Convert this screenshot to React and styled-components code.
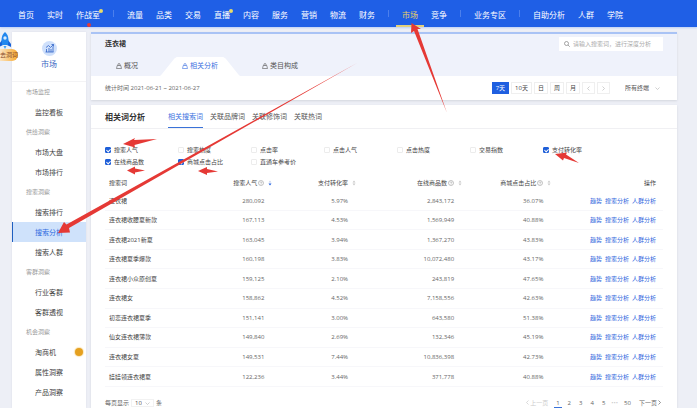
import { useState } from "react";
import styled, { createGlobalStyle } from "styled-components";

const navGroups = [
    ["首页", "实时", "作战室"],
    ["流量", "品类", "交易", "直播", "内容", "服务", "营销", "物流", "财务"],
    ["市场", "竞争"],
    ["业务专区"],
    ["自助分析", "人群", "学院"],
];
const dotted = ["作战室", "直播"];

const sideMenu = [
    { title: "市场监控", items: ["监控看板"] },
    { title: "供给洞察", items: ["市场大盘", "市场排行"] },
    { title: "搜索洞察", items: ["搜索排行", "搜索分析", "搜索人群"] },
    { title: "客群洞察", items: ["行业客群", "客群透视"] },
    { title: "机会洞察", items: ["淘商机", "属性洞察", "产品洞察"] },
];

const pageTabs = ["概况", "相关分析", "类目构成"];
const wordTabs = ["相关搜索词", "关联品牌词", "关联修饰词", "关联热词"];
const periods = ["7天", "10天", "日", "周", "月"];

const metrics = [
    "搜索人气", "搜索热度", "点击率", "点击人气", "点击热度", "交易指数", "支付转化率",
    "在线商品数", "商城点击占比", "直通车参考价",
];

const columns = [
    { name: "搜索人气", help: true, sorted: true },
    { name: "支付转化率" },
    { name: "在线商品数", help: true },
    { name: "商城点击占比", help: true },
];

const rows = [
    ["连衣裙", "280,092", "5.97%", "2,843,172", "36.07%"],
    ["连衣裙收腰夏新款", "167,113", "4.53%", "1,569,949", "40.88%"],
    ["连衣裙2021新夏", "163,045", "3.94%", "1,367,270", "43.83%"],
    ["连衣裙夏季爆款", "160,198", "3.83%", "10,072,480", "43.17%"],
    ["连衣裙小众原创夏", "159,125", "2.10%", "243,819", "47.65%"],
    ["连衣裙女", "158,862", "4.52%", "7,158,556", "42.63%"],
    ["初恋连衣裙夏季", "151,141", "3.00%", "643,580", "51.38%"],
    ["仙女连衣裙薄款", "149,840", "2.69%", "132,346", "45.19%"],
    ["连衣裙女夏", "149,531", "7.44%", "10,836,398", "42.73%"],
    ["娃娃领连衣裙夏", "122,236", "3.44%", "371,778", "40.88%"],
];

function BagIcon() {
    return (
        <svg width="6" height="6" viewBox="0 0 12 12" fill="none" stroke="currentColor" strokeWidth="1.2">
            <path d="M2.500 5h7L11 11H1z" />
            <path d="M4 5V3a2 2 0 0 1 4 0v2" />
        </svg>
    );
}

function HelpIcon() {
    return (
        <svg width="6" height="6" viewBox="0 0 12 12" fill="none" stroke="#888" strokeWidth="1">
            <circle cx="6" cy="6" r="5" />
            <path d="M4.500 5a1.500 1.500 0 1 1 2 1.500c-.4.2-.5.5-.5 1M6 8.400v1" />
        </svg>
    );
}

function SortIcon({ active }) {
    return (
        <svg width="4" height="6" viewBox="0 0 8 12">
            <path d="M1 5l3-4 3 4z" fill={active ? "#c9d6f0" : "#c8c8c8"} />
            <path d="M1 7l3 4 3-4z" fill={active ? "#1f5fe0" : "#c8c8c8"} />
        </svg>
    );
}

function Chevron({ dir = "down" }) {
    const paths = { down: "M1 3l4 4 4-4", left: "M7 1L3 5l4 4", right: "M3 1l4 4-4 4" };
    return (
        <svg width="5" height="5" viewBox="0 0 10 10" fill="none" stroke="currentColor" strokeWidth="1.4">
            <path d={paths[dir]} />
        </svg>
    );
}

function Rocket() {
    return (
        <RocketBox href="#rocket">
            <svg width="12" height="17" viewBox="0 0 12 17">
                <path d="M2 8L-1 12v3l4-2zM8 8l3 4v3l-4-2z" fill="#1560d8" />
                <path d="M5 0C1.500 3 1 7 2 13h6C9 7 8.500 3 5 0z" fill="#2387ee" />
                <circle cx="5" cy="6" r="1.700" fill="#d8ecff" />
                <path d="M3.500 14h3L5 17z" fill="#3fa0f5" />
            </svg>
            <span>去洞词</span>
        </RocketBox>
    );
}

function Arrows() {
    return (
        <ArrowLayer width="697" height="408" viewBox="0 0 697 408" fill="#e53935" aria-hidden="true">
            <path d="M357 63L69 228 70 232.500 58 233 64 222 66.500 224.500z" />
            <path d="M447 113L417.500 29 421 29 411.500 23 411 33 414 31z" />
            <path d="M157 139L134 140 135 138 123 144 135 147.500 134.500 145z" />
            <path d="M145 170.500L135 168.500 135 166.500 127 170.500 135 174.500 135 172.500z" />
            <path d="M218 171.500L207 169 207 167 198 171 207 175 207 173z" />
            <path d="M579 163L566 154.500 567 152.500 555 154 563 160.500 564 158z" />
            <circle cx="89" cy="25" r="2" />
        </ArrowLayer>
    );
}

function App() {
    const [checked, setChecked] = useState(["搜索人气", "支付转化率", "在线商品数", "商城点击占比"]);
    const [period, setPeriod] = useState("7天");

    const toggle = (name) => {
        setChecked(checked.includes(name) ? checked.filter((m) => m !== name) : [...checked, name]);
    };

    return (
        <Page>
            <GlobalStyle />
            <TopNav>
                {navGroups.map((group) => (
                    <NavGroup key={group[0]}>
                        {group.map((name) => (
                            <NavLink href="#nav" key={name} $active={name === "市场"}>
                                {name}
                                {dotted.includes(name) && <NavDot />}
                            </NavLink>
                        ))}
                    </NavGroup>
                ))}
            </TopNav>
            <Body>
                <Sidebar>
                    <SideHead>
                        <svg width="15" height="15" viewBox="0 0 30 30" fill="none" stroke="#2f62c9" strokeWidth="1.6">
                            <circle cx="15" cy="15" r="15" fill="#cfe0fb" stroke="none" />
                            <path d="M7 22h16M9 22v-6M14 22v-8M18 22v-6M22 22V11M8 13l5-4 4 4 6-6M19 7h4v4" />
                        </svg>
                        <h2>市场</h2>
                    </SideHead>
                    {sideMenu.map((group) => (
                        <div key={group.title}>
                            <SideTitle>{group.title}</SideTitle>
                            {group.items.map((item) => (
                                <SideLink href="#side" key={item} $active={item === "搜索分析"}>
                                    {item}
                                    {item === "淘商机" && <HotDot />}
                                </SideLink>
                            ))}
                        </div>
                    ))}
                </Sidebar>
                <Main>
                    <Card $accent>
                        <CardTop>
                            <TitleRow>
                                <h1>连衣裙</h1>
                                <SearchBox>
                                    <svg width="6" height="6" viewBox="0 0 12 12" fill="none" stroke="#777" strokeWidth="1.3">
                                        <circle cx="5" cy="5" r="4" />
                                        <path d="M8 8l3.500 3.500" />
                                    </svg>
                                    <input type="text" aria-label="搜索词" placeholder="请输入搜索词，进行深度分析" />
                                </SearchBox>
                            </TitleRow>
                            <PageTabs>
                                {pageTabs.map((tab) => (
                                    <PageTab key={tab} $active={tab === "相关分析"}>
                                        <BagIcon />
                                        {tab}
                                    </PageTab>
                                ))}
                            </PageTabs>
                        </CardTop>
                        <FilterRow>
                            <p>统计时间 2021-06-21 ~ 2021-06-27</p>
                            <Periods>
                                {periods.map((p) => (
                                    <PeriodButton key={p} $active={p === period} onClick={() => setPeriod(p)}>
                                        {p}
                                    </PeriodButton>
                                ))}
                                <PeriodButton $muted aria-label="上一个"><Chevron dir="left" /></PeriodButton>
                                <PeriodButton $muted aria-label="下一个"><Chevron dir="right" /></PeriodButton>
                            </Periods>
                            <SelectWrap>
                                <select aria-label="终端">
                                    <option>所有终端</option>
                                </select>
                                <Chevron />
                            </SelectWrap>
                        </FilterRow>
                    </Card>
                    <Card $fill>
                        <WordHead>
                            <h2>相关词分析</h2>
                            {wordTabs.map((tab) => (
                                <WordTab key={tab} $active={tab === "相关搜索词"}>{tab}</WordTab>
                            ))}
                        </WordHead>
                        <MetricGrid>
                            {metrics.map((name) => (
                                <Metric key={name}>
                                    <input type="checkbox" checked={checked.includes(name)} onChange={() => toggle(name)} />
                                    {name}
                                </Metric>
                            ))}
                        </MetricGrid>
                        <TableWrap>
                            <WordTable>
                                <thead>
                                    <tr>
                                        <th>搜索词</th>
                                        {columns.map((col) => (
                                            <th key={col.name}>
                                                <HeadCell>
                                                    {col.name}
                                                    {col.help && <HelpIcon />}
                                                    <SortButton aria-label={col.name}><SortIcon active={col.sorted} /></SortButton>
                                                </HeadCell>
                                            </th>
                                        ))}
                                        <th>操作</th>
                                    </tr>
                                </thead>
                                <tbody>
                                    {rows.map((row) => (
                                        <tr key={row[0]}>
                                            {row.map((cell) => <td key={cell}>{cell}</td>)}
                                            <td>
                                                <RowLinks>
                                                    <a href="#trend">趋势</a>
                                                    <a href="#search">搜索分析</a>
                                                    <a href="#crowd">人群分析</a>
                                                </RowLinks>
                                            </td>
                                        </tr>
                                    ))}
                                </tbody>
                            </WordTable>
                        </TableWrap>
                        <TableFoot>
                            <PageSize>
                                <label htmlFor="size">每页显示</label>
                                <SelectWrap $boxed>
                                    <select id="size">
                                        <option>10</option>
                                    </select>
                                    <Chevron />
                                </SelectWrap>
                                条
                            </PageSize>
                            <Pager>
                                <PageButton $muted disabled><Chevron dir="left" />上一页</PageButton>
                                {["1", "2", "3", "4", "5"].map((n) => (
                                    <PageButton key={n} $active={n === "1"}>{n}</PageButton>
                                ))}
                                <PageDots>•••</PageDots>
                                <PageButton>50</PageButton>
                                <PageButton>下一页<Chevron dir="right" /></PageButton>
                            </Pager>
                        </TableFoot>
                    </Card>
                </Main>
            </Body>
            <Rocket />
            <Arrows />
        </Page>
    );
}

export default App;

const GlobalStyle = createGlobalStyle`
    * {
        box-sizing: border-box;
        margin: 0;
        padding: 0;
    }
    body {
        background: #edeff6;
        color: #444;
        font: 6px/1 "Open Sans", "Noto Sans CJK SC", sans-serif;
    }
    a {
        color: inherit;
        text-decoration: none;
    }
    button, input, select {
        font: inherit;
        color: inherit;
        border: 0;
        background: none;
        outline: none;
    }
    svg {
        display: block;
        flex: none;
    }
`;

const Page = styled.div`
    position: relative;
    min-height: 100vh;
    display: flex;
    flex-direction: column;
    overflow: hidden;
`;

const TopNav = styled.nav`
    display: flex;
    height: 27px;
    padding: 0 18px;
    background: #1f5fe6;
    box-shadow: 0 1px 2px #b9cdf5;
    color: #fff;
    font-size: 8px;
`;

const NavGroup = styled.div`
    display: flex;
    align-items: center;
    gap: 13px;

    & + &::before {
        content: "";
        width: 1px;
        height: 7px;
        margin-left: 13px;
        background: #4c7fec;
    }
`;

const NavLink = styled.a`
    position: relative;
    line-height: 25px;
    padding-top: 2px;
    height: 27px;
    white-space: nowrap;
    color: ${({ $active }) => ($active ? "#e9cf6a" : "#fff")};

    &::after {
        content: "";
        display: ${({ $active }) => ($active ? "block" : "none")};
        position: absolute;
        left: -6px;
        right: -6px;
        bottom: 0;
        height: 2px;
        background: #e3d07c;
    }
`;

const NavDot = styled.i`
    position: absolute;
    top: 9px;
    right: -3px;
    width: 4px;
    height: 4px;
    border-radius: 50%;
    background: #e8dc6a;
`;

const Body = styled.div`
    flex: 1;
    display: flex;
    gap: 5px;
    padding: 5px 20px 0 12px;
`;

const Sidebar = styled.aside`
    flex: none;
    width: 74px;
    background: #fff;
    box-shadow: 0 0 2px #d9dce6;
`;

const SideHead = styled.div`
    display: flex;
    flex-direction: column;
    align-items: center;
    gap: 4px;
    height: 50px;
    padding-top: 9px;
    border-bottom: 1px solid #f3f3f5;

    h2 {
        font-size: 8px;
        font-weight: 400;
        line-height: 8px;
        color: #3a68c4;
    }
`;

const SideTitle = styled.h3`
    padding-left: 14px;
    font-size: 6px;
    font-weight: 400;
    line-height: 20px;
    color: #999;
`;

const SideLink = styled.a`
    display: flex;
    align-items: center;
    justify-content: space-between;
    height: 20px;
    padding: 0 3px 0 22px;
    border-left: 1px solid ${({ $active }) => ($active ? "#1f5fc0" : "#fff")};
    background: ${({ $active }) => ($active ? "#cfe2fb" : "#fff")};
    color: ${({ $active }) => ($active ? "#2f6be0" : "#444")};
    font-size: 7px;
`;

const HotDot = styled.i`
    width: 8px;
    height: 8px;
    border-radius: 50%;
    background: #e5a01f;
    box-shadow: 0 0 1px 1px #fbe6bb;
`;

const Main = styled.main`
    flex: 1;
    min-width: 0;
    display: flex;
    flex-direction: column;
    gap: 5px;
`;

const Card = styled.section`
    flex: ${({ $fill }) => ($fill ? 1 : "none")};
    background: #fff;
    border-top: ${({ $accent }) => ($accent ? "2px solid #a9c3f5" : "0")};
    box-shadow: 0 1px 2px #d3d6de;
`;

const CardTop = styled.div`
    padding-top: 3px;
    background: #eff2fb;
`;

const TitleRow = styled.div`
    display: flex;
    align-items: center;
    justify-content: space-between;
    padding: 0 14px;

    h1 {
        font-size: 7px;
        font-weight: 700;
        line-height: 14px;
        color: #333;
    }
`;

const SearchBox = styled.label`
    display: flex;
    align-items: center;
    gap: 3px;
    width: 104px;
    height: 14px;
    padding-left: 5px;
    background: #fff;

    input {
        flex: 1;
        min-width: 0;
        &::placeholder {color: #aaa;}
    }
`;

const PageTabs = styled.div`
    display: flex;
    margin-top: 6px;
    padding-left: 3px;
`;

const PageTab = styled.button`
    display: flex;
    align-items: center;
    gap: 2px;
    height: 19px;
    padding: 0 22px 2px;
    font-size: 7px;
    color: ${({ $active }) => ($active ? "#3a6fe0" : "#555")};
    background: ${({ $active }) => ($active ? "#fff" : "none")};
    clip-path: ${({ $active }) => ($active ? "polygon(18% 8%, 21% 0, 79% 0, 82% 8%, 98% 92%, 100% 100%, 0 100%, 2% 92%)" : "none")};
`;

const FilterRow = styled.div`
    display: flex;
    align-items: center;
    height: 24px;
    padding: 0 17px 0 14px;

    p {
        flex: 1;
        color: #666;
    }
`;

const Periods = styled.div`
    display: flex;
    gap: 2px;
    margin-right: 15px;
`;

const PeriodButton = styled.button`
    display: flex;
    align-items: center;
    justify-content: center;
    height: 12px;
    padding: 0 3px;
    border: 1px solid ${({ $active }) => ($active ? "#1f5fe0" : "#efefef")};
    background: ${({ $active }) => ($active ? "#1f5fe0" : "#fff")};
    color: ${({ $active, $muted }) => ($active ? "#fff" : $muted ? "#bbb" : "#444")};
`;

const SelectWrap = styled.span`
    display: flex;
    align-items: center;
    gap: ${({ $boxed }) => ($boxed ? "3px" : "5px")};
    padding: ${({ $boxed }) => ($boxed ? "0 3px" : "0")};
    border: ${({ $boxed }) => ($boxed ? "1px solid #f2f2f2" : "0")};
    color: #555;

    select {
        appearance: none;
    }
    svg {
        color: #bbb;
    }
`;

const WordHead = styled.div`
    display: flex;
    gap: 7px;
    padding-left: 14px;
    border-bottom: 1px solid #f0f0f3;

    h2 {
        margin-right: 16px;
        font-size: 8px;
        font-weight: 700;
        line-height: 23px;
        color: #333;
    }
`;

const WordTab = styled.button`
    height: 23px;
    border-bottom: 1px solid ${({ $active }) => ($active ? "#3a72d8" : "transparent")};
    font-size: 7px;
    color: ${({ $active }) => ($active ? "#3a72e0" : "#555")};
`;

const MetricGrid = styled.div`
    display: grid;
    grid-template-columns: repeat(7, 1fr);
    padding: 15px 61px 0 14px;
`;

const Metric = styled.label`
    display: flex;
    align-items: center;
    gap: 3px;
    height: 12px;
    white-space: nowrap;

    input {
        appearance: none;
        display: grid;
        place-items: center;
        width: 6px;
        height: 6px;
        border: 1px solid #ececec;
        border-radius: 1px;

        &:checked {
            border-color: #1f5fd8;
            background: #1f5fd8;
        }
        &:checked::after {
            content: "";
            width: 2px;
            height: 3px;
            border: solid #fff;
            border-width: 0 1px 1px 0;
            transform: rotate(45deg);
        }
    }
`;

const TableWrap = styled.div`
    padding: 5px 14px 0;
`;

const WordTable = styled.table`
    width: 100%;
    height: 214px;
    table-layout: fixed;
    border-collapse: collapse;

    th {
        height: 19px;
        font-weight: 400;
        text-align: right;
    }
    th:nth-child(1) {width: 15%;}
    th:nth-child(2) {width: 15%;}
    th:nth-child(3) {width: 15%;}
    th:nth-child(4) {width: 19%;}
    th:nth-child(5) {width: 16%;}

    td {
        padding-right: 8px;
        border-bottom: 1px solid #f7f7fa;
        text-align: right;
        white-space: nowrap;
        color: #666;
    }
    th:first-child, td:first-child {
        padding-left: 4px;
        text-align: left;
        color: #444;
    }
    th:last-child, td:last-child {
        padding-right: 7px;
    }
`;

const HeadCell = styled.span`
    display: flex;
    align-items: center;
    justify-content: flex-end;
    gap: 1px;
`;

const SortButton = styled.button`
    margin-left: 3px;
`;

const RowLinks = styled.div`
    display: flex;
    justify-content: flex-end;
    gap: 3px;
    color: #2f66dd;
`;

const TableFoot = styled.footer`
    display: flex;
    align-items: center;
    justify-content: space-between;
    margin-top: 11px;
    padding: 0 13px 0 14px;
    color: #666;
`;

const PageSize = styled.div`
    display: flex;
    align-items: center;
    gap: 2px;
`;

const Pager = styled.div`
    display: flex;
    align-items: center;
    gap: 4px;
`;

const PageButton = styled.button`
    display: flex;
    align-items: center;
    padding: 0 2px;
    height: 10px;
    border-bottom: 1px solid ${({ $active }) => ($active ? "#3a72d8" : "transparent")};
    color: ${({ $muted }) => ($muted ? "#ccc" : "#666")};
`;

const PageDots = styled.span`
    color: #ccc;
`;

const RocketBox = styled.a`
    position: absolute;
    top: 32px;
    left: 0;

    span {
        display: block;
        width: 18px;
        padding: 3px 0;
        border-radius: 0 6px 6px 0;
        background: linear-gradient(90deg, #fbe3c0, #f7a92d);
        color: #8a4a2a;
        line-height: 6px;
    }
`;

const ArrowLayer = styled.svg`
    position: absolute;
    top: 0;
    left: 0;
    pointer-events: none;
`;
